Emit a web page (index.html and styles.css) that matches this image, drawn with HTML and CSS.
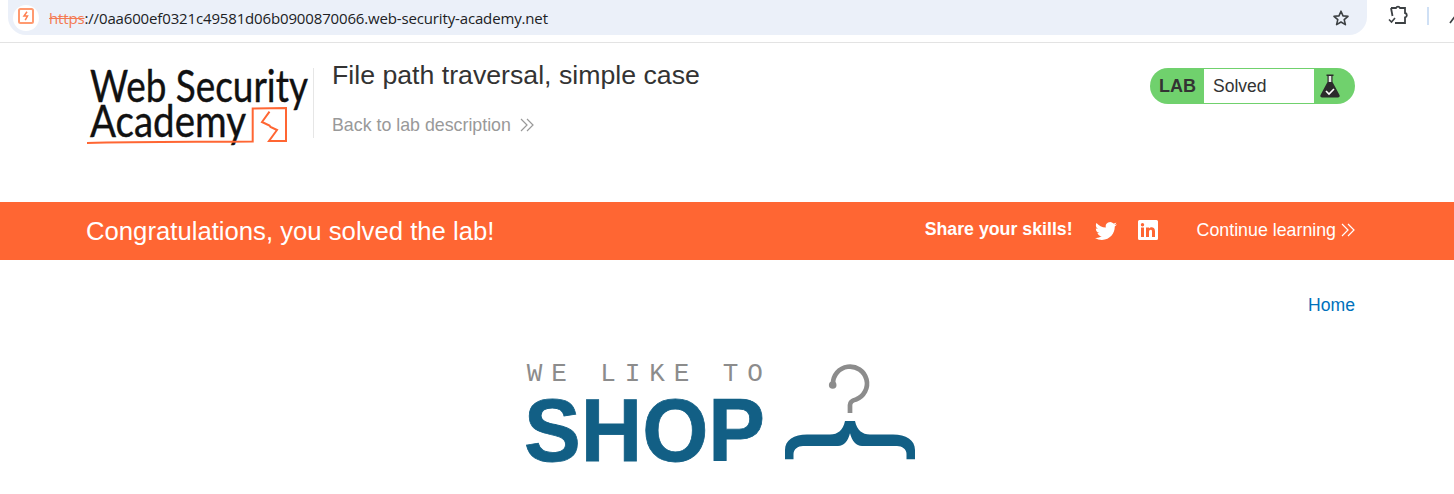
FILE: index.html
```html
<!DOCTYPE html>
<html lang="en">
<head>
<meta charset="utf-8">
<title>File path traversal, simple case</title>
<link rel="stylesheet" href="styles.css">
</head>
<body>
<div class="chrome">
  <div class="omnibox">
    <span class="site-icon">
      <svg viewBox="0 0 16 16" width="16" height="16"><rect x="1" y="1" width="14" height="14" rx="1.500" fill="#fff" stroke="#ff9a70" stroke-width="2"/><path d="M9 3.800 6 8h3.500L7.200 12.200" fill="none" stroke="#ff8152" stroke-width="1.500"/></svg>
    </span>
    <span class="url"><s class="scheme">https</s><span class="scheme-sep">:</span>//0aa600ef0321c49581d06b0900870066.web-security-academy.net</span>
    <svg class="star" viewBox="0 0 18 18" width="18" height="18"><path d="M9 2.2l2 4.7 5 .4-3.8 3.3 1.2 5L9 13l-4.400 2.600 1.200-5L2 7.300l5-.4z" fill="none" stroke="#3c4043" stroke-width="1.600" stroke-linejoin="round"/></svg>
  </div>
  <div class="chrome-tools">
    <svg viewBox="0 0 22 22" width="22" height="22"><path d="M4 4h5a2.200 2.200 0 0 1 4 0h5v5a2.300 2.300 0 0 1 0 4.500V19H8M4 4l1.500 8" fill="none" stroke="#3c4043" stroke-width="1.800"/><path d="M2 15.500 4.500 18 8 14" fill="none" stroke="#3c4043" stroke-width="1.600"/></svg>
    <span class="tool-sep"></span>
    <svg class="tool-cut" viewBox="0 0 14 22" width="14" height="22"><path d="M2 19l6-8M10 4l-1 7M7 18h7" fill="none" stroke="#3c4043" stroke-width="1.700"/></svg>
  </div>
</div>

<header class="lab-header">
  <svg class="academy-logo" viewBox="0 0 226 80" width="226" height="80" role="img" aria-label="Web Security Academy">
    <text class="logo-word" x="3" y="35" textLength="218" lengthAdjust="spacingAndGlyphs">Web Security</text>
    <text class="logo-word" x="3" y="70" textLength="156" lengthAdjust="spacingAndGlyphs">Academy</text>
    <path d="M0 76c50-1.500 110-1 165.700-1.500V41.500L199 41v33h-17l8-11-6.500-3-1-1.500-7.500-3.500 7.500-10.300" fill="none" stroke="#ff6633" stroke-width="2"/>
  </svg>
  <span class="logo-sep"></span>
  <div class="lab-title">
    <h2>File path traversal, simple case</h2>
    <a class="back-link" href="#">Back to lab description <svg class="chev" viewBox="0 0 14 14" width="14" height="14"><path d="M1 1l6 6-6 6M7 1l6 6-6 6" fill="none" stroke="#999" stroke-width="1.200"/></svg></a>
  </div>
  <div class="lab-status">
    <span class="lab-tag">LAB</span>
    <span class="lab-solved">Solved</span>
    <span class="flask">
      <svg viewBox="0 0 20 24" width="20" height="24"><path d="M6.500.5h7V2h-1v6l7 13c.6 1.300-.2 2.500-1.500 2.500H2C.7 23.500-.1 22.300.5 21l7-13V2h-1z" fill="#2b2b2b"/><path d="M8.700 2h2.600v6H8.700z" fill="#e8e8e8"/><path d="M6 17l3 3 5-5" fill="none" stroke="#fff" stroke-width="1.600"/></svg>
    </span>
  </div>
</header>

<section class="banner">
  <h4>Congratulations, you solved the lab!</h4>
  <div class="banner-right">
    <span class="share">Share your skills!</span>
    <svg class="twitter" viewBox="0 0 24 24" width="22" height="22"><path fill="#fff" d="M23.950 4.570a10 10 0 0 1-2.820.770 4.960 4.960 0 0 0 2.160-2.720c-.950.550-2 .950-3.130 1.180a4.920 4.920 0 0 0-8.380 4.480C7.690 8.090 4.070 6.130 1.640 3.160a4.820 4.820 0 0 0-.660 2.470c0 1.710.870 3.210 2.190 4.100a4.900 4.900 0 0 1-2.230-.610v.060a4.920 4.920 0 0 0 3.950 4.830 5 5 0 0 1-2.210.080 4.940 4.940 0 0 0 4.600 3.420A9.870 9.870 0 0 1 0 19.540a13.940 13.940 0 0 0 7.550 2.210c9.050 0 14-7.500 14-13.980l-.010-.640a9.900 9.900 0 0 0 2.410-2.560z"/></svg>
    <svg class="linkedin" viewBox="0 0 20 20" width="20" height="20"><path fill="#fff" fill-rule="evenodd" d="M1.500 0h17A1.500 1.500 0 0 1 20 1.500v17a1.500 1.500 0 0 1-1.500 1.500h-17A1.500 1.500 0 0 1 0 18.500v-17A1.500 1.500 0 0 1 1.500 0zM3 7.500V17h3V7.500zM4.500 3a1.700 1.700 0 1 0 0 3.400 1.700 1.700 0 0 0 0-3.400zM8 7.500V17h3v-5c0-1.500.7-2.300 1.800-2.300S14 10.500 14 12v5h3v-5.800c0-2.700-1.400-4-3.400-4-1.300 0-2.100.6-2.600 1.300V7.500z"/></svg>
    <a class="continue" href="#">Continue learning <svg class="chev" viewBox="0 0 14 14" width="14" height="14"><path d="M1 1l6 6-6 6M7 1l6 6-6 6" fill="none" stroke="#fff" stroke-width="1.200"/></svg></a>
  </div>
</section>

<nav class="site-nav"><a href="#">Home</a></nav>

<div class="shop-wrap">
  <svg class="shop-logo" viewBox="0 0 390 100" width="390" height="100" role="img" aria-label="We like to shop">
    <text class="shop-small" x="8.500 33 82 106.500 131 155.500 204.500 229" y="17">WELIKETO</text>
    <text class="shop-big" x="-2" y="96.500" textLength="241" lengthAdjust="spacingAndGlyphs">SHOP</text>
    <path d="M307 20A17 17 0 1 1 330 35.500Q324 37 324 41V49" fill="none" stroke="#8c8c8c" stroke-width="4.700"/>
    <circle cx="306.700" cy="21" r="3.800" fill="#8c8c8c"/>
    <path d="M319 57h10C331 66 336 70.500 344 70.500h23C380 70.500 389 76 389 86v9.300h-8.500V90C380.500 85 376 82 371 82H336C330 82 326 77 324 69.300 322 77 318 82 312 82H277C272 82 267.500 85 267.500 90v5.300h-8.500V86C259 76 268 70.500 281 70.500h23C312 70.500 317 66 319 57z" fill="#125f85"/>
  </svg>
</div>
</body>
</html>
```

FILE: styles.css
```css
* { box-sizing: border-box; }
html, body { margin: 0; padding: 0; }
body {
  width: 1454px;
  height: 494px;
  overflow: hidden;
  background: #fff;
  color: #333;
  font-family: "Liberation Sans", Arial, sans-serif;
}
a { text-decoration: none; }

.chrome {
  height: 43px;
  display: flex;
  padding-left: 8px;
  border-bottom: 1px solid #e3e3e3;
}
.omnibox {
  flex: none;
  width: 1359px;
  height: 35px;
  background: #ebf0f9;
  border-radius: 0 0 18px 18px;
  display: flex;
  align-items: center;
  padding: 0 17px 0 5px;
}
.site-icon {
  flex: none;
  width: 26px;
  height: 26px;
  border-radius: 50%;
  background: #fff;
  display: flex;
  align-items: center;
  justify-content: center;
}
.site-icon svg { margin-bottom: 3px; }
.url {
  margin-left: 10px;
  font-family: "Open Sans", "Noto Sans", sans-serif;
  font-size: 15px;
  letter-spacing: -0.15px;
  color: #202124;
  flex: 1;
}
.scheme { color: #f47a52; }
.scheme-sep { color: #202124; }
.chrome-tools {
  flex: none;
  display: flex;
  align-items: flex-start;
  padding: 4px 0 0 20px;
}
.tool-sep { width: 2px; height: 18px; background: #cfe0f5; margin: 3px 0 0 18px; }
.tool-cut { margin-left: 19px; }

.lab-header {
  height: 159px;
  padding: 21px 99px 0 87px;
  display: flex;
  align-items: flex-start;
}
.academy-logo { flex: none; margin-top: 3px; overflow: visible; }
.logo-word {
  font-family: Lato, "Open Sans", sans-serif;
  font-size: 44px;
  fill: #111;
  stroke: #111;
  stroke-width: 0.4px;
}
.logo-sep { flex: none; width: 1px; height: 70px; margin: 4px 0 0 0; background: #e6e6e6; }
.lab-title { margin-left: 18px; flex: 1; }
.lab-title h2 {
  margin: 0;
  font-size: 26.700px;
  font-weight: 400;
  line-height: 22px;
  color: #333;
}
.back-link {
  display: flex;
  align-items: center;
  gap: 9px;
  margin-top: 29px;
  font-size: 17.800px;
  line-height: 20px;
  color: #999;
}
.lab-status {
  flex: none;
  width: 205px;
  height: 36px;
  margin-top: 4px;
  border-radius: 18px;
  background: #70d16d;
  padding: 1px 0;
  display: flex;
  align-items: stretch;
}
.lab-tag {
  width: 54px;
  text-align: center;
  font-size: 18px;
  font-weight: 700;
  line-height: 34px;
  color: #333;
  padding-left: 1px;
}
.lab-solved {
  width: 110px;
  background: #fff;
  padding-left: 9px;
  font-size: 17.500px;
  line-height: 34px;
  color: #333;
}
.flask { flex: 1; display: flex; align-items: center; padding-left: 6px; }

.banner {
  height: 58px;
  background: #ff6633;
  color: #fff;
  padding: 0 99px 0 86px;
  display: flex;
  align-items: center;
  justify-content: space-between;
}
.banner h4 { margin: 0; font-size: 25.700px; font-weight: 400; }
.banner-right { display: flex; align-items: center; }
.share { font-size: 17.750px; font-weight: 700; margin-top: -3px; }
.twitter { margin-left: 22px; }
.linkedin { margin-left: 21px; margin-bottom: 2px; }
.continue {
  margin-left: 39px;
  margin-bottom: 2px;
  display: flex;
  align-items: center;
  gap: 5px;
  color: #fff;
  font-size: 17.800px;
}

.site-nav {
  padding: 35px 99px 0 0;
  text-align: right;
  font-size: 17.600px;
  line-height: 20px;
}
.site-nav a { color: #0071bc; }

.shop-wrap { padding: 49px 0 0 526px; }
.shop-logo { display: block; overflow: visible; }
.shop-small {
  font-family: "Liberation Mono", monospace;
  font-size: 26px;
  text-anchor: middle;
  fill: #8c8c8c;
}
.shop-big {
  font-family: "Liberation Sans", Arial, sans-serif;
  font-weight: 700;
  font-size: 88.500px;
  fill: #125f85;
  stroke: #125f85;
  stroke-width: 0.8px;
}
```
